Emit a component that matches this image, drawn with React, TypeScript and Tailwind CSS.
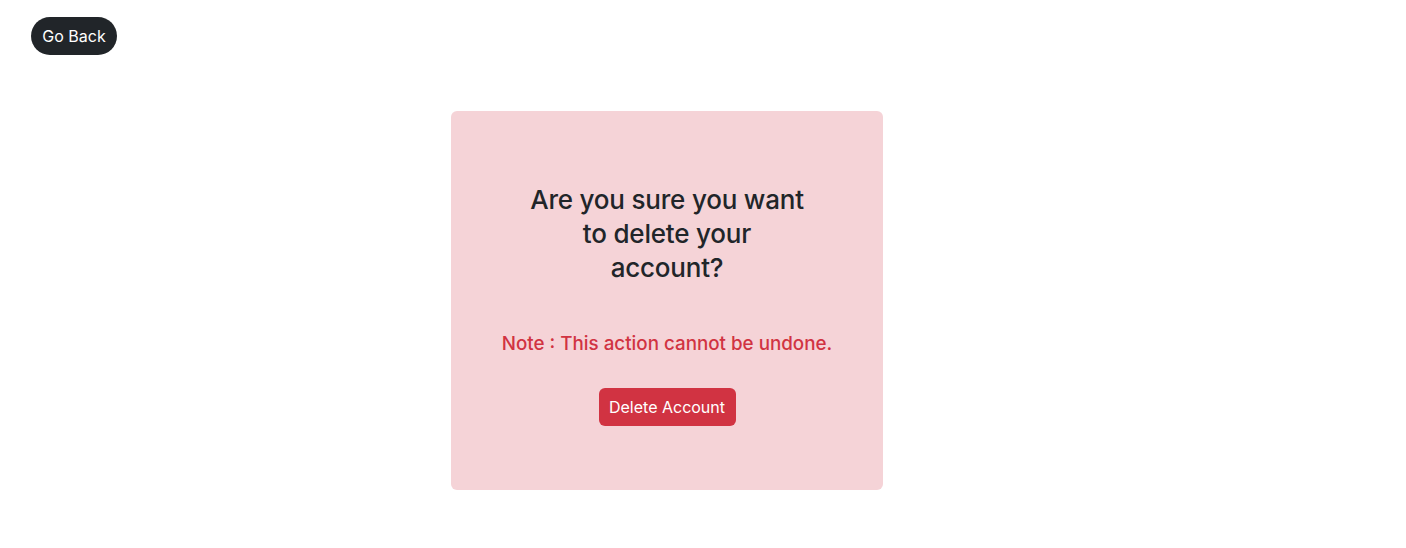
export default function App() {
  return (
    <div className="min-h-screen bg-white font-['Inter','Liberation_Sans',sans-serif] text-[#212529]">
      <div className="pt-[17px] pl-[31px]">
        <button className="h-[38px] w-[86px] rounded-full bg-[#212529] text-[16px] text-white">
          Go Back
        </button>
      </div>
      <div className="mt-[56px] pl-[451px]">
        <div className="flex h-[379px] w-[432px] flex-col items-center rounded-[6px] bg-[#f5d3d7] pt-[72px]">
          <h2 className="w-[280px] text-center text-[26px] leading-[34px] font-medium tracking-[-0.2px]">
            Are you sure you want to delete your account?
          </h2>
          <p className="mt-[44px] text-center text-[18.8px] leading-[30px] font-medium text-[#d13342]">
            Note : This action cannot be undone.
          </p>
          <button className="mt-[29px] h-[38px] w-[137px] rounded-[6px] bg-[#d13342] text-[16px] text-white">
            Delete Account
          </button>
        </div>
      </div>
    </div>
  );
}
